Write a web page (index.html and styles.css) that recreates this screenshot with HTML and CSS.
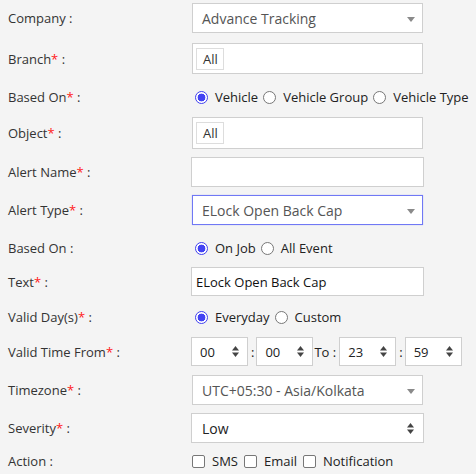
FILE: index.html
```html
<!DOCTYPE html>
<html>
<head>
<meta charset="utf-8">
<link rel="stylesheet" href="styles.css">
</head>
<body>
<form class="form">
  <div class="row h30 mb10">
    <div class="label">Company :</div>
    <div class="select">
      <span class="select-text">Advance Tracking</span>
      <svg class="caret" width="8" height="5" viewBox="0 0 8 5"><polygon points="0,0 8,0 4,5" fill="#8a8a8a"/></svg>
    </div>
  </div>
  <div class="row h31 mb13">
    <div class="label">Branch<span class="req">*</span> :</div>
    <div class="multi"><span class="tag">All</span></div>
  </div>
  <div class="row h20 mb10">
    <div class="label">Based On<span class="req">*</span> :</div>
    <div class="options">
      <label class="opt"><span class="radio checked"></span>Vehicle</label>
      <label class="opt"><span class="radio"></span>Vehicle Group</label>
      <label class="opt"><span class="radio"></span>Vehicle Type</label>
    </div>
  </div>
  <div class="row h32 mb8">
    <div class="label">Object<span class="req">*</span> :</div>
    <div class="multi"><span class="tag">All</span></div>
  </div>
  <div class="row h30 mb8">
    <div class="label">Alert Name<span class="req">*</span> :</div>
    <div class="input"></div>
  </div>
  <div class="row h30 mb13">
    <div class="label">Alert Type<span class="req">*</span> :</div>
    <div class="select focused">
      <span class="select-text">ELock Open Back Cap</span>
      <svg class="caret" width="8" height="5" viewBox="0 0 8 5"><polygon points="0,0 8,0 4,5" fill="#8a8a8a"/></svg>
    </div>
  </div>
  <div class="row h20 mb9">
    <div class="label">Based On :</div>
    <div class="options">
      <label class="opt"><span class="radio checked"></span>On Job</label>
      <label class="opt"><span class="radio"></span>All Event</label>
    </div>
  </div>
  <div class="row h29 mb11">
    <div class="label">Text<span class="req">*</span> :</div>
    <div class="input"><span class="input-text">ELock Open Back Cap</span></div>
  </div>
  <div class="row h20 mb10">
    <div class="label">Valid Day(s)<span class="req">*</span> :</div>
    <div class="options">
      <label class="opt"><span class="radio checked"></span>Everyday</label>
      <label class="opt"><span class="radio"></span>Custom</label>
    </div>
  </div>
  <div class="row h29 mb9">
    <div class="label">Valid Time From<span class="req">*</span> :</div>
    <div class="times">
      <div class="num"><span>00</span><svg class="spin" width="7" height="11" viewBox="0 0 7 11"><polygon points="0,4.5 3.5,0 7,4.5" fill="#444"/><polygon points="0,6.5 3.5,11 7,6.5" fill="#444"/></svg></div>
      <span class="colon">:</span>
      <div class="num"><span>00</span><svg class="spin" width="7" height="11" viewBox="0 0 7 11"><polygon points="0,4.5 3.5,0 7,4.5" fill="#444"/><polygon points="0,6.5 3.5,11 7,6.5" fill="#444"/></svg></div>
      <span class="to">To :</span>
      <div class="num"><span>23</span><svg class="spin" width="7" height="11" viewBox="0 0 7 11"><polygon points="0,4.5 3.5,0 7,4.5" fill="#444"/><polygon points="0,6.5 3.5,11 7,6.5" fill="#444"/></svg></div>
      <span class="colon">:</span>
      <div class="num"><span>59</span><svg class="spin" width="7" height="11" viewBox="0 0 7 11"><polygon points="0,4.5 3.5,0 7,4.5" fill="#444"/><polygon points="0,6.5 3.5,11 7,6.5" fill="#444"/></svg></div>
    </div>
  </div>
  <div class="row h30 mb8">
    <div class="label">Timezone<span class="req">*</span> :</div>
    <div class="select">
      <span class="select-text">UTC+05:30 - Asia/Kolkata</span>
      <svg class="caret" width="8" height="5" viewBox="0 0 8 5"><polygon points="0,0 8,0 4,5" fill="#8a8a8a"/></svg>
    </div>
  </div>
  <div class="row h30 mb8">
    <div class="label">Severity<span class="req">*</span> :</div>
    <div class="input native">
      <span class="input-text">Low</span>
      <svg class="spin" width="7" height="11" viewBox="0 0 7 11"><polygon points="0,4.5 3.5,0 7,4.5" fill="#444"/><polygon points="0,6.5 3.5,11 7,6.5" fill="#444"/></svg>
    </div>
  </div>
  <div class="row h20">
    <div class="label">Action :</div>
    <div class="options checks">
      <label class="opt"><span class="check"></span>SMS</label>
      <label class="opt"><span class="check"></span>Email</label>
      <label class="opt"><span class="check"></span>Notification</label>
    </div>
  </div>
</form>
</body>
</html>
```
FILE: styles.css
```css
html, body {
  margin: 0;
  padding: 0;
  background: #f4f4f4;
}
body {
  font-family: "Open Sans", "DejaVu Sans", sans-serif;
  font-size: 13px;
  color: #333;
  width: 476px;
  height: 474px;
  overflow: hidden;
}
.form {
  display: flex;
  flex-direction: column;
  padding: 3px 0 0 8px;
}
.row {
  display: flex;
  align-items: center;
}
.h20 { height: 20px; }
.h29 { height: 29px; }
.h30 { height: 30px; }
.h31 { height: 31px; }
.h32 { height: 32px; }
.mb8 { margin-bottom: 8px; }
.mb9 { margin-bottom: 9px; }
.mb10 { margin-bottom: 10px; }
.mb11 { margin-bottom: 11px; }
.mb13 { margin-bottom: 13px; }

.label {
  width: 183px;
  flex: none;
  color: #333;
  white-space: nowrap;
}
.req {
  color: #ff1a1a;
}
.select {
  box-sizing: border-box;
  margin-left: 1px;
  width: 231px;
  height: 100%;
  background: #fff;
  border: 1px solid #cfcfcf;
  display: flex;
  align-items: center;
  padding: 0 7px 0 9px;
}
.select.focused {
  border-color: #7078f5;
  box-shadow: 0 0 1px rgba(80, 90, 240, 0.4);
}
.select-text {
  flex: 1;
  font-size: 14px;
  color: #555;
  white-space: nowrap;
}
.caret {
  flex: none;
  margin-top: 2px;
}
.multi {
  box-sizing: border-box;
  margin-left: 1px;
  width: 231px;
  height: 100%;
  background: #fff;
  border: 1px solid #cfcfcf;
  display: flex;
  align-items: center;
  padding: 0 0 0 3px;
}
.tag {
  box-sizing: border-box;
  height: 22px;
  width: 28px;
  border: 1px solid #ddd;
  display: flex;
  align-items: center;
  padding-left: 6px;
  color: #333;
}
.input {
  box-sizing: border-box;
  width: 233px;
  height: 100%;
  background: #fff;
  border: 1px solid #cfcfcf;
  display: flex;
  align-items: center;
  padding: 0 8px 0 4px;
}
.input-text {
  flex: 1;
  color: #111;
  white-space: nowrap;
}
.input.native {
  padding: 0 9px 0 10px;
}
.input.native .input-text {
  font-size: 14px;
  color: #222;
}
.options {
  display: flex;
  align-items: center;
  color: #222;
  white-space: nowrap;
}
.opt {
  display: flex;
  align-items: center;
}
.radio {
  box-sizing: border-box;
  width: 13px;
  height: 13px;
  border-radius: 50%;
  border: 1px solid #777;
  background: #fff;
  margin: 0 7px 0 5px;
  flex: none;
}
.options .opt:first-child .radio {
  margin-left: 4px;
}
.radio.checked {
  border: 1px solid #4040f0;
  background: radial-gradient(circle, #4343f3 0, #4343f3 3.6px, #fff 4.2px);
}
.check {
  box-sizing: border-box;
  width: 13px;
  height: 13px;
  border-radius: 2px;
  border: 1px solid #777;
  background: #fff;
  margin: 0 7px 0 6px;
  flex: none;
}
.checks .opt:first-child .check {
  margin-left: 1px;
}
.times {
  display: flex;
  align-items: center;
  height: 100%;
  color: #222;
}
.num {
  box-sizing: border-box;
  width: 57px;
  height: 100%;
  background: #fff;
  border: 1px solid #cfcfcf;
  display: flex;
  align-items: center;
  justify-content: space-between;
  padding: 0 8px 0 8px;
}
.colon {
  margin: 0 2px 0 3px;
}
.to {
  margin: 0 3px 0 1px;
}
.spin {
  flex: none;
}
```
